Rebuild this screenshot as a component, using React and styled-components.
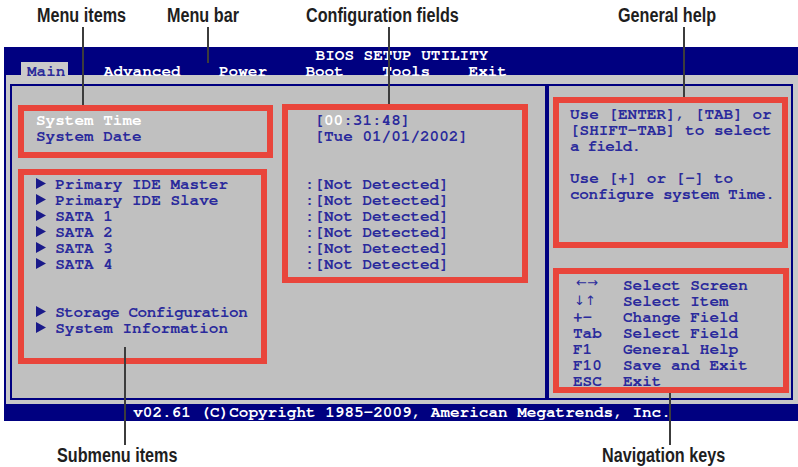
import React from "react";
import styled, { createGlobalStyle } from "styled-components";

const Global = createGlobalStyle`
  html, body { margin: 0; padding: 0; background: #ffffff; }
  #root { width: 798px; height: 467px; }
`;

const NAVY = "#000080";
const INK = "#2a2a9c";
const RED = "#e9453b";

const Figure = styled.div`
  position: relative;
  width: 798px;
  height: 467px;
  box-sizing: border-box;
  padding: 48px 0 0 4px;
  background: #ffffff;
  overflow: hidden;
`;

const Screen = styled.div`
  width: 794px;
  background: ${NAVY};
  font-family: "Nimbus Mono PS", "Nimbus Mono L", "FreeMono", "Courier New", "Liberation Mono", monospace;
  font-weight: 700;
  font-size: 16px;
  color: ${INK};
`;

const TitleBar = styled.div`
  height: 28px;
  color: #ffffff;
  line-height: 16px;
`;

const Title = styled.div`
  height: 16px;
  margin-top: -1px;
  margin-bottom: 1px;
  text-align: center;
  padding-left: 2px;
`;

const MenuRow = styled.div`
  display: flex;
  gap: 4ch;
  height: 12px;
  margin-top: -1px;
  padding-left: 23px;
  white-space: pre;
`;

const MenuItem = styled.span`
  display: inline-block;
  height: 16px;
  color: ${(p) => (p.$active ? "#2b2b9a" : "#ffffff")};
  background: ${(p) => (p.$active ? "#cacaca" : "transparent")};
  padding: ${(p) => (p.$active ? "1px 3px 2px 6px" : "0")};
  margin: ${(p) => (p.$active ? "-1px -3px -2px -6px" : "0")};
`;

const Panel = styled.div`
  display: flex;
  height: 329px;
  box-sizing: border-box;
  margin-left: 2px;
  padding: 9px 5px 4px 4px;
  background: #c8c8c8;
`;

const LeftPane = styled.div`
  width: 537px;
  box-sizing: border-box;
  border: 2px solid ${NAVY};
  padding: 26px 0 0 24px;
  background: #c0c0c0;
`;

const RightPane = styled.div`
  flex: 1;
  display: flex;
  flex-direction: column;
  box-sizing: border-box;
  border: 2px solid ${NAVY};
  padding: 20px 0 0 21px;
  background: #c0c0c0;
`;

const Row = styled.div`
  display: grid;
  grid-template-columns: 28ch auto;
  height: 16px;
  line-height: 16px;
  white-space: pre;
  margin-top: ${(p) => (p.$skip ? p.$skip * 16 : 0)}px;
`;

const Label = styled.span`
  color: ${(p) => (p.$selected ? "#ffffff" : INK)};
  letter-spacing: ${(p) => p.$track || 0}px;
`;

const Value = styled.span`
  color: ${INK};
`;

const Hot = styled.span`
  color: #ffffff;
`;

const ArrowBox = styled.span`
  display: inline-block;
  width: 2ch;
  height: 16px;
  vertical-align: top;
  letter-spacing: 0;
  svg { display: block; margin-top: 2px; }
`;

const Line = styled.div`
  height: 16px;
  line-height: 16px;
  white-space: pre;
  letter-spacing: ${(p) => p.$track || 0}px;
  margin-top: ${(p) => (p.$skip ? p.$skip * 16 : 0)}px;
`;

const NavList = styled.div`
  margin-top: 75px;
  padding-left: 3px;
`;

const NavRow = styled.div`
  display: grid;
  grid-template-columns: 50px auto;
  height: 16px;
  line-height: 16px;
  white-space: pre;
`;

const ArrowGlyph = styled.span`
  font-family: "DejaVu Sans", sans-serif;
  font-weight: 400;
  font-size: 13px;
  letter-spacing: 0px;
  position: relative;
  top: ${(p) => p.$dy}px;
  left: ${(p) => p.$dx}px;
`;

const StatusBar = styled.div`
  height: 17px;
  line-height: 17px;
  text-align: center;
  color: #ffffff;
  padding-left: 2px;
`;

const RedBox = styled.div`
  position: absolute;
  box-sizing: border-box;
  border: 6px solid ${RED};
  left: ${(p) => p.$x}px;
  top: ${(p) => p.$y}px;
  width: ${(p) => p.$w}px;
  height: ${(p) => p.$h}px;
`;

const Leader = styled.div`
  position: absolute;
  width: 2px;
  background: #3c3c3c;
  left: ${(p) => p.$x}px;
  top: ${(p) => p.$y}px;
  height: ${(p) => p.$h}px;
`;

const Callout = styled.div`
  position: absolute;
  left: ${(p) => p.$x}px;
  top: ${(p) => p.$y}px;
  font-family: "Liberation Sans", Arial, sans-serif;
  font-weight: 700;
  font-size: 19.5px;
  line-height: 19.5px;
  color: #1e1e1e;
  white-space: nowrap;
  transform: scaleX(0.83);
  transform-origin: left top;
`;

const Tri = () => (
  <svg width="10" height="11" viewBox="0 0 10 11">
    <polygon points="0,0 10,5.5 0,11" fill="#1a1a8a" />
  </svg>
);

const ports = [
  "Primary IDE Master",
  "Primary IDE Slave",
  "SATA 1",
  "SATA 2",
  "SATA 3",
  "SATA 4",
];

const nav = [
  ["arrowsLR", "Select Screen"],
  ["arrowsUD", "Select Item"],
  ["+-", "Change Field"],
  ["Tab", "Select Field"],
  ["F1", "General Help"],
  ["F10", "Save and Exit"],
  ["ESC", "Exit"],
];

export default function App() {
  return (
    <>
      <Global />
      <Figure>
        <Screen>
          <TitleBar>
            <Title>BIOS SETUP UTILITY</Title>
            <MenuRow>
              <MenuItem $active>Main</MenuItem>
              <MenuItem>Advanced</MenuItem>
              <MenuItem>Power</MenuItem>
              <MenuItem>Boot</MenuItem>
              <MenuItem>Tools</MenuItem>
              <MenuItem>Exit</MenuItem>
            </MenuRow>
          </TitleBar>
          <Panel>
            <LeftPane>
              <Row>
                <Label $selected>System Time</Label>
                <Value>
                  {" ["}
                  <Hot>00</Hot>
                  {":31:48]"}
                </Value>
              </Row>
              <Row>
                <Label>System Date</Label>
                <Value> [Tue 01/01/2002]</Value>
              </Row>
              {ports.map((p, i) => (
                <Row key={p} $skip={i === 0 ? 2 : 0}>
                  <Label>
                    <ArrowBox>
                      <Tri />
                    </ArrowBox>
                    {p}
                  </Label>
                  <Value>:[Not Detected]</Value>
                </Row>
              ))}
              <Row $skip={2}>
                <Label $track={-0.45}>
                  <ArrowBox>
                    <Tri />
                  </ArrowBox>
                  Storage Configuration
                </Label>
              </Row>
              <Row>
                <Label>
                  <ArrowBox>
                    <Tri />
                  </ArrowBox>
                  System Information
                </Label>
              </Row>
            </LeftPane>
            <RightPane>
              <div>
                <Line>Use [ENTER], [TAB] or</Line>
                <Line>[SHIFT-TAB] to select</Line>
                <Line $track={-0.8}>a field.</Line>
                <Line $skip={1}>Use [+] or [-] to</Line>
                <Line $track={-0.3}>configure system Time.</Line>
              </div>
              <NavList>
                {nav.map(([k, d]) => (
                  <NavRow key={d}>
                    <span>
                      {k === "arrowsLR" ? (
                        <ArrowGlyph $dy={-3} $dx={3}>←→</ArrowGlyph>
                      ) : k === "arrowsUD" ? (
                        <ArrowGlyph $dy={-1} $dx={1}>↓↑</ArrowGlyph>
                      ) : (
                        k
                      )}
                    </span>
                    <span>{d}</span>
                  </NavRow>
                ))}
              </NavList>
            </RightPane>
          </Panel>
          <StatusBar>v02.61 (C)Copyright 1985-2009, American Megatrends, Inc.</StatusBar>
        </Screen>

        <RedBox $x={18} $y={105} $w={255} $h={53} />
        <RedBox $x={18} $y={169} $w={249} $h={195} />
        <RedBox $x={282} $y={104} $w={246} $h={179} />
        <RedBox $x={553} $y={97} $w={235} $h={151} />
        <RedBox $x={553} $y={268} $w={236} $h={125} />

        <Leader $x={82} $y={27} $h={78} />
        <Leader $x={207} $y={27} $h={36} />
        <Leader $x={388} $y={27} $h={77} />
        <Leader $x={683} $y={27} $h={70} />
        <Leader $x={124} $y={347} $h={98} />
        <Leader $x={669} $y={393} $h={52} />

        <Callout $x={37} $y={5.5}>Menu items</Callout>
        <Callout $x={167} $y={5.5}>Menu bar</Callout>
        <Callout $x={306} $y={5.5}>Configuration fields</Callout>
        <Callout $x={618} $y={5.5}>General help</Callout>
        <Callout $x={57} $y={445.5}>Submenu items</Callout>
        <Callout $x={602} $y={445.5}>Navigation keys</Callout>
      </Figure>
    </>
  );
}
